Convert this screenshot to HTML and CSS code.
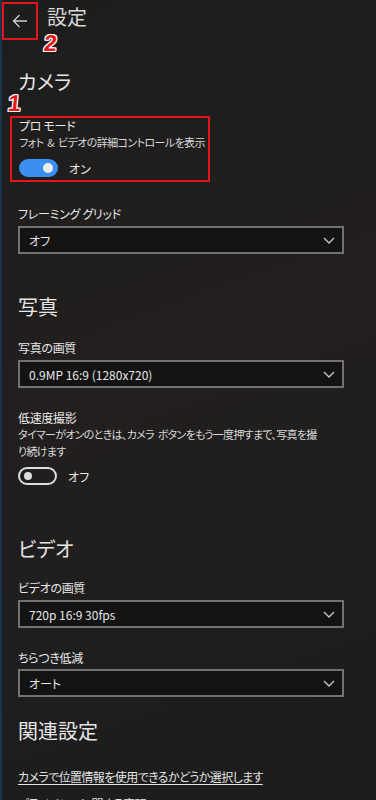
FILE: index.html
```html
<!DOCTYPE html>
<html lang="ja">
<head>
<meta charset="utf-8">
<title>設定</title>
<link rel="stylesheet" href="styles.css">
</head>
<body>
<div class="page">
  <header class="header">
    <div class="back">
      <svg width="16" height="14" viewBox="0 0 16 14"><path d="M15 7H1.5M7.5 1L1.5 7l6 6" fill="none" stroke="#cfcfcf" stroke-width="1.3"/></svg>
    </div>
    <h1 class="title">設定</h1>
    <span class="mark mark2">2</span>
  </header>

  <section class="section first">
    <h2 class="heading">カメラ</h2>
    <span class="mark mark1">1</span>
    <div class="setting pro">
      <div class="label">プロ モード</div>
      <div class="desc">フォト &amp; ビデオの詳細コントロールを表示</div>
      <div class="toggle-row">
        <span class="toggle on"><span class="knob"></span></span>
        <span class="state">オン</span>
      </div>
    </div>
    <div class="setting grid">
      <div class="label">フレーミング グリッド</div>
      <div class="select"><span>オフ</span><svg class="chev" width="12" height="7" viewBox="0 0 12 7"><path d="M1 1l5 5 5-5" fill="none" stroke="#c8c8c8" stroke-width="1.3"/></svg></div>
    </div>
  </section>

  <section class="section photo">
    <h2 class="heading">写真</h2>
    <div class="setting tight">
      <div class="label">写真の画質</div>
      <div class="select"><span>0.9MP 16:9 (1280x720)</span><svg class="chev" width="12" height="7" viewBox="0 0 12 7"><path d="M1 1l5 5 5-5" fill="none" stroke="#c8c8c8" stroke-width="1.3"/></svg></div>
    </div>
    <div class="setting">
      <div class="label">低速度撮影</div>
      <div class="desc long">タイマーがオンのときは、カメラ ボタンをもう一度押すまで、写真を撮<br>り続けます</div>
      <div class="toggle-row off-row">
        <span class="toggle off"><span class="knob"></span></span>
        <span class="state">オフ</span>
      </div>
    </div>
  </section>

  <section class="section video">
    <h2 class="heading">ビデオ</h2>
    <div class="setting tight2">
      <div class="label">ビデオの画質</div>
      <div class="select"><span>720p 16:9 30fps</span><svg class="chev" width="12" height="7" viewBox="0 0 12 7"><path d="M1 1l5 5 5-5" fill="none" stroke="#c8c8c8" stroke-width="1.3"/></svg></div>
    </div>
    <div class="setting">
      <div class="label">ちらつき低減</div>
      <div class="select s3"><span>オート</span><svg class="chev" width="12" height="7" viewBox="0 0 12 7"><path d="M1 1l5 5 5-5" fill="none" stroke="#c8c8c8" stroke-width="1.3"/></svg></div>
    </div>
  </section>

  <section class="section related">
    <h2 class="heading">関連設定</h2>
    <a class="link" href="#">カメラで位置情報を使用できるかどうか選択します</a>
    <a class="link" href="#">プライバシーに関する声明</a>
  </section>
</div>
</body>
</html>
```

FILE: styles.css
```css
* { box-sizing: border-box; }
html, body { margin: 0; padding: 0; }
body {
  background: #1f1f1f;
  color: #e4e4e4;
  font-family: "Noto Sans CJK JP", "Noto Sans", sans-serif;
  font-feature-settings: "palt";
  width: 376px;
  height: 800px;
  overflow: hidden;
}
.page {
  border-left: 2px solid #17344c;
  height: 800px;
  background: linear-gradient(160deg, #1d1d1d 0%, #221f1e 45%, #1f1e1e 70%, #1c1c1c 100%);
}
.header {
  position: relative;
  display: flex;
  align-items: flex-start;
  height: 68px;
}
.back {
  margin: 2px 0 0 0;
  width: 36px;
  height: 38px;
  border: 2px solid #e4141b;
  display: flex;
  align-items: center;
  justify-content: center;
}
.title {
  margin: 3px 0 0 9px;
  font-size: 20px;
  line-height: 28px;
  font-weight: 400;
  color: #d6d6d6;
}
.mark {
  position: absolute;
  font-family: "Liberation Sans", sans-serif;
  font-weight: 700;
  font-size: 23px;
  line-height: 23px;
  color: #e4141b;
  transform: skewX(-6deg);
  text-shadow: 1px 0 0 #fff, -1px 0 0 #fff, 0 1px 0 #fff, 0 -1px 0 #fff, 1px 1px 0 #fff, -1px -1px 0 #fff, 1px -1px 0 #fff, -1px 1px 0 #fff;
}
.mark2 { left: 42px; top: 32px; }
.section {
  position: relative;
  padding-left: 16px;
}
.mark1 { left: 6px; top: 24px; }
.heading {
  margin: 0;
  font-size: 20px;
  line-height: 28px;
  font-weight: 400;
  color: #e6e6e6;
}
.label {
  font-size: 12px;
  line-height: 16px;
  color: #e8e8e8;
  letter-spacing: -0.3px;
}
.desc {
  font-size: 11px;
  line-height: 16px;
  color: #d8d8d8;
  letter-spacing: -0.6px;
  word-spacing: 2px;
  white-space: nowrap;
}
.desc.long { line-height: 17px; letter-spacing: -0.7px; }
.setting { margin-top: 22px; }
.setting.grid { margin-top: 24px; }
.setting.tight { margin-top: 19px; }
.setting.tight2 { margin-top: 17px; }
.pro {
  margin-top: 20px;
  margin-left: -8px;
  width: 200px;
  padding: 0 6px 3px 7px;
  border: 2px solid #e4141b;
}
.toggle-row {
  display: flex;
  align-items: center;
  margin-top: 9px;
  height: 18px;
}
.off-row { margin-top: 7px; }
.toggle {
  width: 39px;
  height: 18px;
  border-radius: 9px;
  display: flex;
  align-items: center;
}
.toggle.on {
  background: #3b8fee;
  justify-content: flex-end;
  padding-right: 5px;
}
.toggle.on .knob {
  width: 10px; height: 10px; border-radius: 50%; background: #ececec;
}
.toggle.off {
  border: 2px solid #dcdcdc;
  padding-left: 4px;
}
.toggle.off .knob {
  width: 8px; height: 8px; border-radius: 50%; background: #dcdcdc;
}
.state {
  margin-left: 11px;
  font-size: 12px;
  color: #e8e8e8;
}
.select {
  margin-top: 4px;
  width: 326px;
  height: 28px;
  border: 2px solid #727272;
  background: #131313;
  display: flex;
  align-items: center;
  justify-content: space-between;
  padding: 0 7px 0 9px;
  font-size: 12px;
  color: #e6e6e6;
}
.select.s3 { margin-top: 3px; }
.section.photo { margin-top: 39px; }
.section.video { margin-top: 50px; }
.section.related { margin-top: 20px; }
.link {
  display: block;
  margin-top: 24px;
  font-size: 12px;
  line-height: 16px;
  color: #e4e4e4;
  letter-spacing: -0.6px;
  text-decoration: underline;
  text-underline-offset: 2px;
}
.link + .link { margin-top: 11px; }
```
